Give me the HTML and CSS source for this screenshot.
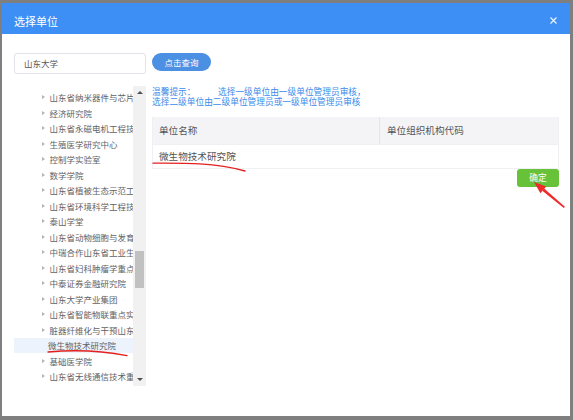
FILE: index.html
```html
<!DOCTYPE html>
<html lang="zh-CN">
<head>
<meta charset="utf-8">
<title>选择单位</title>
<link rel="stylesheet" href="styles.css">
</head>
<body>
<div class="dialog">
  <div class="dialog-header">
    <span class="dialog-title">选择单位</span>
    <svg class="close" width="7" height="7" viewBox="0 0 7 7"><path d="M0.5 0.5 L6.5 6.5 M6.5 0.5 L0.5 6.5" stroke="#fff" stroke-width="1.2" fill="none"/></svg>
  </div>
  <div class="dialog-body">
    <div class="search-input">山东大学</div>
    <div class="search-btn">点击查询</div>
    <div class="tree">
      <div class="tree-items">
        <div class="tree-item"><i class="caret"></i><span>山东省纳米器件与芯片技术工程实验室</span></div>
        <div class="tree-item"><i class="caret"></i><span>经济研究院</span></div>
        <div class="tree-item"><i class="caret"></i><span>山东省永磁电机工程技术研究中心</span></div>
        <div class="tree-item"><i class="caret"></i><span>生殖医学研究中心</span></div>
        <div class="tree-item"><i class="caret"></i><span>控制学实验室</span></div>
        <div class="tree-item"><i class="caret"></i><span>数学学院</span></div>
        <div class="tree-item"><i class="caret"></i><span>山东省植被生态示范工程技术</span></div>
        <div class="tree-item"><i class="caret"></i><span>山东省环境科学工程技术中心</span></div>
        <div class="tree-item"><i class="caret"></i><span>泰山学堂</span></div>
        <div class="tree-item"><i class="caret"></i><span>山东省动物细胞与发育生物学</span></div>
        <div class="tree-item"><i class="caret"></i><span>中瑞合作山东省工业生物技术</span></div>
        <div class="tree-item"><i class="caret"></i><span>山东省妇科肿瘤学重点实验室</span></div>
        <div class="tree-item"><i class="caret"></i><span>中泰证券金融研究院</span></div>
        <div class="tree-item"><i class="caret"></i><span>山东大学产业集团</span></div>
        <div class="tree-item"><i class="caret"></i><span>山东省智能物联重点实验室</span></div>
        <div class="tree-item"><i class="caret"></i><span>脏器纤维化与干预山东省重点</span></div>
        <div class="tree-item selected"><span>微生物技术研究院</span></div>
        <div class="tree-item"><i class="caret"></i><span>基础医学院</span></div>
        <div class="tree-item"><i class="caret"></i><span>山东省无线通信技术重点实验室</span></div>
      </div>
      <div class="scrollbar">
        <i class="sb-up"></i>
        <div class="sb-thumb"></div>
        <i class="sb-down"></i>
      </div>
    </div>
    <div class="right">
      <div class="hint">
        <div><span class="hint-label">温馨提示：</span>选择一级单位由一级单位管理员审核，</div>
        <div>选择二级单位由二级单位管理员或一级单位管理员审核</div>
      </div>
      <div class="table">
        <div class="th">单位名称</div>
        <div class="th th-divided">单位组织机构代码</div>
        <div class="td">微生物技术研究院</div>
        <div class="td"></div>
      </div>
      <div class="confirm-row">
        <div class="confirm-btn">确定</div>
      </div>
    </div>
  </div>
</div>

<svg class="mark mark-tree" width="90" height="12" viewBox="44 346 90 12">
  <path d="M48 352 C70 350, 96 349.6, 127 355.6" stroke="#e3201f" stroke-width="1.3" fill="none" stroke-linecap="round"/>
</svg>
<svg class="mark mark-table" width="100" height="14" viewBox="150 160 100 14">
  <path d="M153 163.2 C185 163, 215 162.8, 245 171" stroke="#e3201f" stroke-width="1.3" fill="none" stroke-linecap="round"/>
</svg>
<svg class="mark mark-arrow" width="40" height="32" viewBox="530 179 40 32">
  <polygon points="534,182 546.2,186.4 540.4,193.2" fill="#ef2a2a"/>
  <polygon points="544.1,188.6 542.3,190.8 563.8,208 564.9,206.7" fill="#ef2a2a"/>
</svg>
</body>
</html>
```

FILE: styles.css
```css
html, body {
  margin: 0;
  padding: 0;
  background: #7f7f7f;
}
body {
  position: relative;
  width: 573px;
  height: 420px;
  overflow: hidden;
  font-family: "Noto Sans CJK SC", "Liberation Sans", sans-serif;
}
.dialog {
  margin: 3px 3px 0 2px;
  height: 413px;
  background: #fff;
  overflow: hidden;
}
.dialog-header {
  height: 31px;
  background: #3d8ff6;
  display: flex;
  align-items: center;
  justify-content: space-between;
  padding: 0 13px 0 12px;
}
.dialog-title {
  color: #fff;
  font-size: 11px;
  line-height: 14px;
  padding-top: 4px;
}
.close {
  display: block;
  margin-top: 3px;
  opacity: 0.9;
}
.dialog-body {
  display: grid;
  grid-template-columns: 132px 407px;
  grid-template-rows: 21px auto;
  column-gap: 6px;
  row-gap: 12px;
  padding: 19px 0 0 12px;
}
.search-input {
  box-sizing: border-box;
  height: 21px;
  border: 1px solid #e1e3e8;
  border-radius: 3px;
  padding-left: 9px;
  font-size: 8.5px;
  line-height: 19px;
  color: #555;
}
.search-btn {
  width: 59px;
  height: 18px;
  border-radius: 9px;
  background: #4b90e2;
  color: #fff;
  font-size: 8.5px;
  line-height: 18px;
  text-align: center;
}
.tree {
  display: flex;
  height: 300px;
}
.tree-items {
  flex: 1;
  overflow: hidden;
  padding-top: 3.5px;
}
.tree-item {
  display: flex;
  align-items: center;
  height: 15.5px;
  padding-left: 28px;
  white-space: nowrap;
  overflow: hidden;
  font-size: 8.5px;
  color: #5f6266;
}
.tree-item .caret {
  flex: none;
  width: 0;
  height: 0;
  border-left: 3.5px solid #b5b5b5;
  border-top: 2.5px solid transparent;
  border-bottom: 2.5px solid transparent;
  margin-right: 4.5px;
}
.tree-item.selected {
  background: #edf3fc;
  padding-left: 34px;
}
.scrollbar {
  flex: none;
  width: 13px;
  background: #f1f1f1;
  display: flex;
  flex-direction: column;
  align-items: center;
}
.sb-up, .sb-down {
  display: block;
  width: 0;
  height: 0;
  border-left: 3px solid transparent;
  border-right: 3px solid transparent;
}
.sb-up {
  margin-top: 5px;
  border-bottom: 3px solid #505050;
}
.sb-thumb {
  width: 9px;
  height: 37px;
  background: #c1c1c1;
  margin-top: 157px;
}
.sb-down {
  margin-top: auto;
  margin-bottom: 5px;
  border-top: 3px solid #505050;
}
.right {
  display: flex;
  flex-direction: column;
}
.hint {
  margin-top: 1px;
  font-size: 8.7px;
  line-height: 9.5px;
  color: #3b8aea;
  white-space: nowrap;
}
.hint-label {
  display: inline-block;
  width: 66px;
}
.table {
  margin-top: 11px;
  display: grid;
  grid-template-columns: 226px 1fr;
  border: 1px solid #eef0f4;
  border-top: none;
}
.th {
  height: 27px;
  background: #f4f4f6;
  font-size: 9.6px;
  line-height: 27px;
  color: #555;
  padding-left: 6px;
}
.th-divided {
  border-left: 1px solid #e4e5ea;
  padding-left: 7px;
}
.td {
  height: 23px;
  font-size: 9.6px;
  line-height: 23px;
  color: #555;
  padding-left: 6px;
  border-top: 1px solid #eef0f4;
}
.confirm-row {
  display: flex;
  justify-content: flex-end;
}
.confirm-btn {
  width: 42px;
  height: 18px;
  border-radius: 3px;
  background: #67c23a;
  color: #fff;
  font-size: 8.7px;
  line-height: 18px;
  text-align: center;
}
.mark {
  position: absolute;
  display: block;
}
.mark-tree { left: 44px; top: 346px; }
.mark-table { left: 150px; top: 160px; }
.mark-arrow { left: 530px; top: 179px; }
```
